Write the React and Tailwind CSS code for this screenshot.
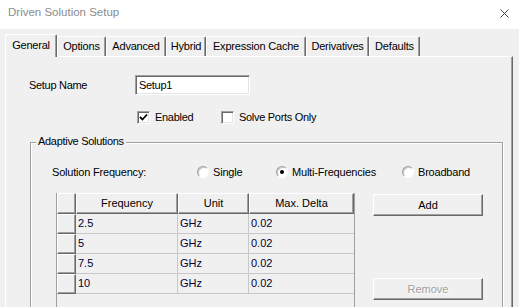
import React from 'react';

// Win classic 3D edges
const raised = 'border-t border-l border-t-white border-l-white border-r border-b border-r-[#696969] border-b-[#696969] shadow-[inset_-1px_-1px_0_#a0a0a0]';
const sunken = 'border-t border-l border-t-[#a0a0a0] border-l-[#a0a0a0] border-r border-b border-r-white border-b-white shadow-[inset_1px_1px_0_#696969,inset_-1px_-1px_0_#e3e3e3]';

const tabs = [
  { label: 'General', w: 'w-[52px]', active: true },
  { label: 'Options', w: 'w-[49px]' },
  { label: 'Advanced', w: 'w-[60px]' },
  { label: 'Hybrid', w: 'w-[40px]' },
  { label: 'Expression Cache', w: 'w-[100px]' },
  { label: 'Derivatives', w: 'w-[63px]' },
  { label: 'Defaults', w: 'w-[51px]' },
];

const rows = [
  { f: '2.5', u: 'GHz', d: '0.02' },
  { f: '5', u: 'GHz', d: '0.02' },
  { f: '7.5', u: 'GHz', d: '0.02' },
  { f: '10', u: 'GHz', d: '0.02' },
];

function Checkbox({ checked, label, className = '' }) {
  return (
    <div className={`flex items-center gap-[5px] ${className}`}>
      <div className={`w-[13px] h-[13px] bg-white flex items-center justify-center ${sunken}`}>
        {checked && (
          <svg width="9" height="9" viewBox="0 0 9 9">
            <path d="M1 4 L3.5 6.5 L8 1.5" stroke="#000" strokeWidth="1.8" fill="none" />
          </svg>
        )}
      </div>
      <span>{label}</span>
    </div>
  );
}

function Radio({ checked, label, className = '' }) {
  return (
    <div className={`flex items-center gap-[4px] ${className}`}>
      <div className="w-[12px] h-[12px] rounded-full bg-white border border-t-[#a0a0a0] border-l-[#a0a0a0] border-r-white border-b-white shadow-[inset_1px_1px_0_#c8c8c8] flex items-center justify-center">
        {checked && <div className="w-[4px] h-[4px] rounded-full bg-black" />}
      </div>
      <span>{label}</span>
    </div>
  );
}

function Button({ children, disabled, className = '' }) {
  return (
    <div className={`w-[110px] h-[22px] flex items-center justify-center bg-[#f0f0f0] ${raised} ${disabled ? "text-[#a0a0a0] [text-shadow:1px_1px_0_#fff]" : ''} ${className}`}>
      {children}
    </div>
  );
}

export default function App() {
  return (
    <div className="w-[519px] h-[307px] overflow-hidden bg-[#f0f0f0] text-[11px] text-black font-['Liberation_Sans',Arial,sans-serif] leading-none">
      {/* Title bar */}
      <div className="h-[29px] bg-white flex items-center justify-between pl-[8px] pr-[10px] pb-[3px]">
        <span className="text-[11.5px] text-[#8c8c8c]">Driven Solution Setup</span>
        <svg width="9" height="9" viewBox="0 0 9 9">
          <path d="M0.5 0.5 L8.5 8.5 M8.5 0.5 L0.5 8.5" stroke="#444" strokeWidth="1" fill="none" />
        </svg>
      </div>

      {/* Tabs */}
      <div className="h-[22px] mt-[5px] pl-[5px] flex items-end tracking-[-0.2px]">
        {tabs.map(t => (
          <div
            key={t.label}
            className={
              t.active
                ? `${t.w} h-[23px] -mb-px relative z-10 bg-[#f0f0f0] flex items-center justify-center pb-[2px] border-t border-l border-white border-r border-r-[#696969] shadow-[inset_-1px_0_0_#a0a0a0] rounded-t-[2px]`
                : `${t.w} h-[20px] bg-[#f0f0f0] flex items-center justify-center border-t border-l border-white border-r border-r-[#696969] shadow-[inset_-1px_0_0_#a0a0a0] rounded-t-[2px]`
            }
          >
            {t.label}
          </div>
        ))}
      </div>

      {/* Tab page */}
      <div className="ml-[5px] w-[508px] h-[260px] border-t border-l border-white border-r border-r-[#696969] shadow-[inset_-1px_0_0_#a0a0a0]">
        <div className="mt-[18px] pl-[23px] flex items-center tracking-[-0.3px]">
          <span className="w-[106px]">Setup Name</span>
          <div className={`w-[115px] h-[20px] bg-white flex items-center pl-[3px] ${sunken}`}>Setup1</div>
        </div>

        <div className="mt-[16px] pl-[131px] flex items-center tracking-[-0.3px]">
          <Checkbox checked label="Enabled" className="w-[84px]" />
          <Checkbox label="Solve Ports Only" />
        </div>

        {/* Adaptive Solutions group */}
        <div className="relative mt-[18px] ml-[24px] w-[473px] h-[200px] border border-[#a0a0a0] shadow-[inset_1px_1px_0_#fff,1px_1px_0_#fff]">
          <span className="absolute -top-[7px] left-[5px] px-[2px] bg-[#f0f0f0] tracking-[-0.3px]">Adaptive Solutions</span>

          <div className="mt-[22px] h-[14px] pl-[21px] flex items-center tracking-[-0.2px]">
            <span className="w-[145px]">Solution Frequency:</span>
            <Radio label="Single" className="w-[79px]" />
            <Radio checked label="Multi-Frequencies" className="w-[126px]" />
            <Radio label="Broadband" />
          </div>

          <div className="mt-[14px] pl-[25px] flex gap-[18px]">
            {/* Grid */}
            <div className="w-[299px] h-[130px] border-l border-r border-l-[#a0a0a0] border-r-[#a0a0a0]">
              <div className="grid grid-cols-[19px_102px_71px_105px] h-[21px]">
                <div className={raised} />
                <div className={`flex items-center justify-center ${raised}`}>Frequency</div>
                <div className={`flex items-center justify-center ${raised}`}>Unit</div>
                <div className={`flex items-center justify-center ${raised}`}>Max. Delta</div>
              </div>
              {rows.map(r => (
                <div key={r.f} className="grid grid-cols-[19px_102px_71px_105px] h-[20px] text-[#000033]">
                  <div className={raised} />
                  <div className="flex items-center pl-[2px] border-r border-b border-[#c8c8c8]">{r.f}</div>
                  <div className="flex items-center pl-[2px] border-r border-b border-[#c8c8c8]">{r.u}</div>
                  <div className="flex items-center pl-[2px] border-b border-[#c8c8c8]">{r.d}</div>
                </div>
              ))}
            </div>

            <div className="flex flex-col">
              <Button className="mt-[1px]">Add</Button>
              <Button disabled className="mt-[62px]">Remove</Button>
            </div>
          </div>
        </div>
      </div>
    </div>
  );
}
